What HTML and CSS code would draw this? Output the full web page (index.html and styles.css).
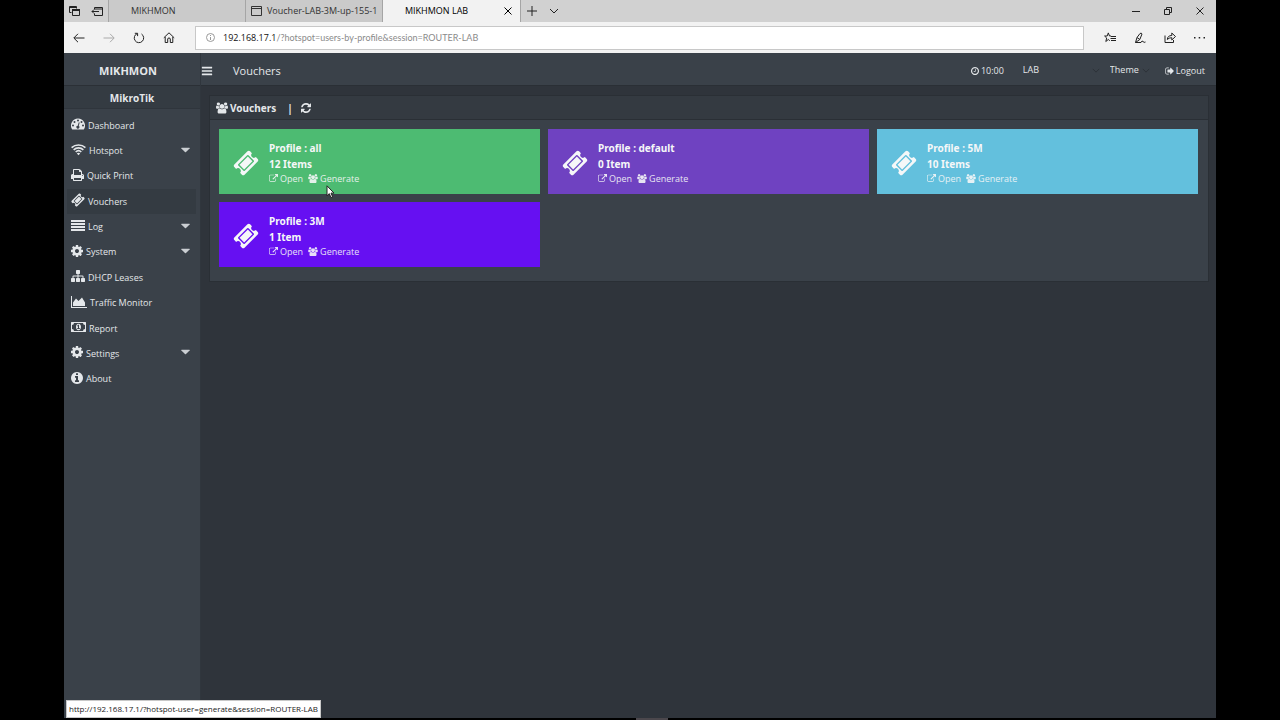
FILE: index.html
```html
<!DOCTYPE html>
<html lang="en">
<head>
<meta charset="utf-8">
<title>MIKHMON LAB</title>
<link rel="stylesheet" href="styles.css">
</head>
<body>
<svg class="sprite" aria-hidden="true">
  <symbol id="ticket" viewBox="0 0 1792 1792"><path d="M1024 452l316 316-572 572-316-316zm-211 979l618-618q19-19 19-45t-19-45l-362-362q-18-18-45-18t-45 18l-618 618q-19 19-19 45t19 45l362 362q18 18 45 18t45-18zm889-637l-907 908q-37 37-90.5 37t-90.5-37l-126-126q56-56 56-136t-56-136-136-56-136 56l-125-126q-37-37-37-90.5t37-90.5l907-906q37-37 90.5-37t90.5 37l125 125q-56 56-56 136t56 136 136 56 136-56l126 125q37 37 37 90.5t-37 90.5z"/></symbol>
  <symbol id="bars" viewBox="0 0 1792 1792"><path d="M1664 1344v128q0 26-19 45t-45 19h-1408q-26 0-45-19t-19-45v-128q0-26 19-45t45-19h1408q26 0 45 19t19 45zm0-512v128q0 26-19 45t-45 19h-1408q-26 0-45-19t-19-45v-128q0-26 19-45t45-19h1408q26 0 45 19t19 45zm0-512v128q0 26-19 45t-45 19h-1408q-26 0-45-19t-19-45v-128q0-26 19-45t45-19h1408q26 0 45 19t19 45z"/></symbol>
  <symbol id="cog" viewBox="128 0 1536 1792"><path d="M1152 896q0-106-75-181t-181-75-181 75-75 181 75 181 181 75 181-75 75-181zm512-109v222q0 12-8 23t-20 13l-185 28q-19 54-39 91 35 50 107 138 10 12 10 25t-9 23q-27 37-99 108t-94 71q-12 0-26-9l-138-108q-44 23-91 38-16 136-29 186-7 28-36 28h-222q-14 0-24.5-8.5t-11.5-21.5l-28-184q-49-16-90-37l-141 107q-10 9-25 9-14 0-25-11-126-114-165-168-7-10-7-23 0-12 8-23 15-21 51-66.5t54-70.5q-27-50-41-99l-183-27q-13-2-21-12.5t-8-23.5v-222q0-12 8-23t19-13l186-28q14-46 39-92-40-57-107-138-10-12-10-24 0-10 9-23 26-36 98.5-107.5t94.5-71.5q13 0 26 10l138 107q44-23 91-38 16-136 29-186 7-28 36-28h222q14 0 24.5 8.5t11.5 21.5l28 184q49 16 90 37l142-107q9-9 24-9 13 0 25 10 129 119 165 170 7 8 7 22 0 12-8 23-15 21-51 66.5t-54 70.5q26 50 41 98l183 28q13 2 21 12.5t8 23.5z"/></symbol>
  <symbol id="info" viewBox="128 0 1536 1792"><path d="M1152 1376v-160q0-14-9-23t-23-9h-96v-512q0-14-9-23t-23-9h-320q-14 0-23 9t-9 23v160q0 14 9 23t23 9h96v320h-96q-14 0-23 9t-9 23v160q0 14 9 23t23 9h448q14 0 23-9t9-23zm-128-896v-160q0-14-9-23t-23-9h-192q-14 0-23 9t-9 23v160q0 14 9 23t23 9h192q14 0 23-9t9-23zm640 416q0 209-103 385.5t-279.5 279.5-385.5 103-385.5-103-279.5-279.5-103-385.5 103-385.5 279.5-279.5 385.5-103 385.5 103 279.5 279.5 103 385.5z"/></symbol>
  <symbol id="open" viewBox="0 0 1792 1792"><path d="M1408 928v320q0 119-84.5 203.5t-203.5 84.5h-832q-119 0-203.5-84.5t-84.5-203.5v-832q0-119 84.5-203.5t203.5-84.5h704q14 0 23 9t9 23v64q0 14-9 23t-23 9h-704q-66 0-113 47t-47 113v832q0 66 47 113t113 47h832q66 0 113-47t47-113v-320q0-14 9-23t23-9h64q14 0 23 9t9 23zm384-864v512q0 26-19 45t-45 19-45-19l-176-176-652 652q-10 10-23 10t-23-10l-114-114q-10-10-10-23t10-23l652-652-176-176q-19-19-19-45t19-45 45-19h512q26 0 45 19t19 45z"/></symbol>
  <symbol id="refresh" viewBox="128 0 1536 1792"><path d="M1639 1056q0 5-1 7-64 268-268 434.5t-478 166.5q-146 0-282.5-55t-243.5-157l-129 129q-19 19-45 19t-45-19-19-45v-448q0-26 19-45t45-19h448q26 0 45 19t19 45-19 45l-137 137q71 66 161 102t187 36q134 0 250-65t186-179q11-17 53-117 8-23 30-23h192q13 0 22.5 9.5t9.5 22.5zm25-800v448q0 26-19 45t-45 19h-448q-26 0-45-19t-19-45 19-45l138-138q-148-137-349-137-134 0-250 65t-186 179q-11 17-53 117-8 23-30 23h-199q-13 0-22.5-9.5t-9.5-22.5v-7q65-268 270-434.5t480-166.5q146 0 284 55.5t245 156.5l130-129q19-19 45-19t45 19 19 45z"/></symbol>
  <symbol id="clock" viewBox="128 0 1536 1792"><path d="M1024 544v448q0 14-9 23t-23 9h-320q-14 0-23-9t-9-23v-64q0-14 9-23t23-9h224v-352q0-14 9-23t23-9h64q14 0 23 9t9 23zm416 352q0-148-73-273t-198-198-273-73-273 73-198 198-73 273 73 273 198 198 273 73 273-73 198-198 73-273zm224 0q0 209-103 385.5t-279.5 279.5-385.5 103-385.5-103-279.5-279.5-103-385.5 103-385.5 279.5-279.5 385.5-103 385.5 103 279.5 279.5 103 385.5z"/></symbol>
  <symbol id="sitemap" viewBox="0 0 1792 1792"><path d="M1792 1248v320q0 40-28 68t-68 28h-320q-40 0-68-28t-28-68v-320q0-40 28-68t68-28h96v-192h-512v192h96q40 0 68 28t28 68v320q0 40-28 68t-68 28h-320q-40 0-68-28t-28-68v-320q0-40 28-68t68-28h96v-192h-512v192h96q40 0 68 28t28 68v320q0 40-28 68t-68 28h-320q-40 0-68-28t-28-68v-320q0-40 28-68t68-28h96v-192q0-52 38-90t90-38h512v-192h-96q-40 0-68-28t-28-68v-320q0-40 28-68t68-28h320q40 0 68 28t28 68v320q0 40-28 68t-68 28h-96v192h512q52 0 90 38t38 90v192h96q40 0 68 28t28 68z"/></symbol>
  <symbol id="logout" viewBox="0 0 1664 1792"><path d="M704 1440q0 4 1 20t.5 26.5-3 23.5-10 19.5-20.5 6.5h-320q-119 0-203.5-84.5t-84.5-203.5v-704q0-119 84.5-203.5t203.5-84.5h320q13 0 22.5 9.5t9.5 22.5q0 4 1 20t.5 26.5-3 23.5-10 19.5-20.5 6.5h-320q-66 0-113 47t-47 113v704q0 66 47 113t113 47h312l11.5 1 11.5 3 8 5.5 7 9 2 13.5zm928-544q0 26-19 45l-544 544q-19 19-45 19t-45-19-19-45v-288h-448q-26 0-45-19t-19-45v-384q0-26 19-45t45-19h448v-288q0-26 19-45t45-19 45 19l544 544q19 19 19 45z"/></symbol>
  <symbol id="print" viewBox="64 0 1664 1792"><path d="M448 1536h896v-256h-896v256zm0-640h896v-384h-160q-40 0-68-28t-28-68v-160h-640v640zm1152 64q0-26-19-45t-45-19-45 19-19 45 19 45 45 19 45-19 19-45zm128 0v416q0 13-9.500 22.500t-22.500 9.500h-224v160q0 40-28 68t-68 28h-960q-40 0-68-28t-28-68v-160h-224q-13 0-22.500-9.500t-9.500-22.500v-416q0-79 56.500-135.500t135.500-56.500h64v-544q0-40 28-68t68-28h672q40 0 88 20t76 48l152 152q28 28 48 76t20 88v256h64q79 0 135.500 56.500t56.500 135.500z"/></symbol>
  <symbol id="users" viewBox="0 0 1920 1792"><path d="M593 896q-162 5-265 128h-134q-82 0-138-40.500t-56-118.500q0-353 124-353 6 0 43.500 21t97.500 42.500 119 21.500q67 0 133-23-5 37-5 66 0 139 81 256zm1071 637q0 120-73 189.500t-194 69.500h-874q-121 0-194-69.500t-73-189.500q0-53 3.500-103.500t14-109 26.500-108.500 43-97.500 62-81 85.500-53.500 111.500-20q10 0 43 21.500t73 48 107 48 135 21.500 135-21.500 107-48 73-48 43-21.500q61 0 111.500 20t85.500 53.500 62 81 43 97.500 26.500 108.500 14 109 3.500 103.500zm-1024-1277q0 106-75 181t-181 75-181-75-75-181 75-181 181-75 181 75 75 181zm704 384q0 159-112.500 271.500t-271.500 112.500-271.500-112.500-112.500-271.500 112.500-271.500 271.500-112.500 271.500 112.500 112.500 271.500zm576 225q0 78-56 118.500t-138 40.500h-134q-103-123-265-128 81-117 81-256 0-29-5-66 66 23 133 23 59 0 119-21.500t97.500-42.500 43.500-21q124 0 124 353zm-128-609q0 106-75 181t-181 75-181-75-75-181 75-181 181-75 181 75 75 181z"/></symbol>
  <symbol id="gauge" viewBox="0 0 28 28"><path fill-rule="evenodd" d="M14 3A14 14 0 0 0 2.200 24.500Q2.500 25 3.100 25H24.900Q25.500 25 25.800 24.500A14 14 0 0 0 14 3ZM4 15a2 2 0 1 0 0 4a2 2 0 1 0 0-4ZM7 8a2 2 0 1 0 0 4a2 2 0 1 0 0-4ZM14 5a2 2 0 1 0 0 4a2 2 0 1 0 0-4ZM21 8a2 2 0 1 0 0 4a2 2 0 1 0 0-4ZM24 15a2 2 0 1 0 0 4a2 2 0 1 0 0-4ZM15.200 11.300l-1.600 6a3 3 0 1 0 1.900.5l1.600-6q.2-1-.8-1.200t-1.100.7Z"/></symbol>
  <symbol id="wifi" viewBox="0 0 30 28"><path d="M15 24.500l-3.400-3.400a5 5 0 0 1 6.800 0Z"/><path fill="none" stroke="currentColor" stroke-width="3.200" d="M9.400 18a8.200 8.200 0 0 1 11.200 0M5.300 13.600a14.300 14.300 0 0 1 19.400 0M1.200 9.300a20.300 20.300 0 0 1 27.600 0"/></symbol>
  <symbol id="lines" viewBox="0 0 14 14"><path d="M0 1h14v2H0zM0 4h14v2H0zM0 7h14v2H0zM0 10h14v2H0z"/></symbol>
  <symbol id="chart" viewBox="0 0 32 28"><path d="M0 2h2v22h30v2H0zM4 22v-7l6-8 5 5 7-7 6 10v7z"/></symbol>
  <symbol id="money" viewBox="0 0 30 28"><path fill-rule="evenodd" d="M1 4h28q1 0 1 1v18q0 1-1 1H1q-1 0-1-1V5q0-1 1-1ZM6 6q0 4-4 4v8q4 0 4 4h18q0-4 4-4v-8q-4 0-4-4ZM15 7.500c3.300 0 5 3 5 6.500s-1.700 6.500-5 6.500-5-3-5-6.500 1.700-6.500 5-6.500ZM14.500 9.500l-2.700 2.300 1 1.200 1.200-1v4.500h-2v1.500h6v-1.500h-2v-7Z"/></symbol>
  <symbol id="caret" viewBox="0 0 10 6"><path d="M.6.500h8.800q.6.200.2.800L5.600 5.200q-.6.500-1.200 0L.4 1.300Q0 .7.600.500Z"/></symbol>
  <symbol id="chevron" viewBox="0 0 10 6"><path class="line" d="M1 1l4 4 4-4"/></symbol>
</svg>

<div class="browser">
  <header class="tabs">
    <div class="tab-tools">
      <button class="plain" aria-label="Tabs set aside"><svg width="11" height="10" viewBox="0 0 11 10"><path class="line" d="M2.500 6.500h-2v-6h7v2M.5 1.500h7"/><path class="line" d="M3.500 3.500h7v6h-7z"/><path d="M3 3h8v2H3z"/></svg></button>
      <button class="plain" aria-label="Set tabs aside"><svg width="12" height="9" viewBox="0 0 12 9"><path class="line" d="M3.500 2.500v-2h8v8h-8v-2M4 2h7M8 4.500H1M3 2.500l-2 2 2 2"/></svg></button>
    </div>
    <button class="tab">MIKHMON</button>
    <button class="tab tab-icon"><svg width="11" height="10" viewBox="0 0 11 10"><path class="line" d="M.5.500h10v9H.5zM.5 2.500h10"/></svg><span>Voucher-LAB-3M-up-155-1</span></button>
    <div class="tab active"><span>MIKHMON LAB</span><button class="plain" aria-label="Close tab"><svg width="8" height="8" viewBox="0 0 8 8"><path class="line" d="M.5.500l7 7M7.500.500l-7 7"/></svg></button></div>
    <button class="plain new" aria-label="New tab"><svg width="10" height="10" viewBox="0 0 10 10"><path class="line" d="M5 0v10M0 5h10"/></svg></button>
    <button class="plain more" aria-label="Tab previews"><svg width="10" height="6"><use href="#chevron"/></svg></button>
    <div class="window">
      <button class="plain" aria-label="Minimize"><svg width="8" height="8" viewBox="0 0 8 8"><path class="line" d="M0 4.500h8"/></svg></button>
      <button class="plain" aria-label="Restore"><svg width="8" height="8" viewBox="0 0 8 8"><path class="line" d="M.5 2.500h5v5h-5zM2.500 2V.5h5v5H6"/></svg></button>
      <button class="plain" aria-label="Close"><svg width="8" height="8" viewBox="0 0 8 8"><path class="line" d="M.5.500l7 7M7.500.500l-7 7"/></svg></button>
    </div>
  </header>

  <div class="toolbar">
    <div class="nav-tools">
      <button class="plain" aria-label="Back"><svg width="12" height="10" viewBox="0 0 12 10"><path class="line" d="M11.500 5H1M5 .8L.8 5 5 9.200"/></svg></button>
      <button class="plain dim" aria-label="Forward"><svg width="12" height="10" viewBox="0 0 12 10"><path class="line" d="M.5 5H11M7 .8L11.200 5 7 9.200"/></svg></button>
      <button class="plain" aria-label="Refresh"><svg width="12" height="12" viewBox="0 0 12 12"><path class="line" d="M4.200 1.600A4.700 4.700 0 1 0 8.500 2M1.800 1.300h2.800v2.800"/></svg></button>
      <button class="plain" aria-label="Home"><svg width="12" height="11" viewBox="0 0 12 11"><path class="line" d="M.8 5.800L6 .8l5.200 5M2.200 5v5.500h2.500V7q0-1 1.300-1t1.300 1v3.500h2.500V5"/></svg></button>
    </div>
    <div class="address">
      <svg width="9" height="9" viewBox="0 0 9 9"><circle class="line" cx="4.500" cy="4.500" r="4"/><path class="line" d="M4.500 4v3M4.500 2v1"/></svg>
      <label for="url">192.168.17.1</label><input id="url" type="text" value="/?hotspot=users-by-profile&amp;session=ROUTER-LAB">
    </div>
    <div class="page-tools">
      <button class="plain" aria-label="Favorites"><svg width="12" height="11" viewBox="0 0 12 11"><path class="line" d="M7 4H5.500L4.300.900 3.200 4H.6l2.100 2-.9 3.500 2.500-2 1.500 1.200M7 4.500h5M6.500 6.500H12M7 8.500h5"/></svg></button>
      <button class="plain" aria-label="Notes"><svg width="12" height="12" viewBox="0 0 12 12"><path class="line" d="M1.500 10.500L3 5.500l3-4q1.500-1 2 .5L5.800 7.500zM3 5.500l2.800 2M1.500 10.500H7q1-2.500 2-1t2.500.5"/></svg></button>
      <button class="plain" aria-label="Share"><svg width="12" height="11" viewBox="0 0 12 11"><path class="line" d="M1 3.500v7h8.500V8M3.300 7.500q.2-4 4.500-4V1l3.700 3.500L7.800 8V5.700q-3 0-4.500 1.800z"/></svg></button>
      <button class="plain" aria-label="More"><svg width="11" height="3" viewBox="0 0 11 3"><path d="M0 1h1.500v1.500H0zM4.700 1h1.500v1.500H4.700zM9.500 1H11v1.500H9.500z"/></svg></button>
    </div>
  </div>

  <div class="app">
    <aside class="sidebar">
      <a class="brand" href="#">MIKHMON</a>
      <div class="router">MikroTik</div>
      <nav class="menu">
        <a href="#"><svg class="i14"><use href="#gauge"/></svg>Dashboard</a>
        <a href="#"><svg class="i15"><use href="#wifi"/></svg>Hotspot<svg class="caret"><use href="#caret"/></svg></a>
        <a href="#"><svg class="i13"><use href="#print"/></svg>Quick Print</a>
        <a href="#" class="current"><svg class="i14"><use href="#ticket"/></svg>Vouchers</a>
        <a href="#"><svg class="i14"><use href="#lines"/></svg>Log<svg class="caret"><use href="#caret"/></svg></a>
        <a href="#"><svg class="i12"><use href="#cog"/></svg>System<svg class="caret"><use href="#caret"/></svg></a>
        <a href="#"><svg class="i14"><use href="#sitemap"/></svg>DHCP Leases</a>
        <a href="#"><svg class="i16"><use href="#chart"/></svg>Traffic Monitor</a>
        <a href="#"><svg class="i15"><use href="#money"/></svg>Report</a>
        <a href="#"><svg class="i12"><use href="#cog"/></svg>Settings<svg class="caret"><use href="#caret"/></svg></a>
        <a href="#"><svg class="i12"><use href="#info"/></svg>About</a>
      </nav>
    </aside>

    <div class="content">
      <header class="topnav">
        <button class="plain" aria-label="Toggle menu"><svg width="12" height="12"><use href="#bars"/></svg></button>
        <span class="title">Vouchers</span>
        <span class="clock"><svg width="8" height="10"><use href="#clock"/></svg>10:00</span>
        <span class="pick session"><select aria-label="Session"><option>LAB</option></select><svg><use href="#chevron"/></svg></span>
        <span class="pick theme"><select aria-label="Theme"><option>Theme</option></select><svg><use href="#chevron"/></svg></span>
        <a class="logout" href="#"><svg width="9" height="10"><use href="#logout"/></svg>Logout</a>
      </header>

      <main>
        <section class="panel">
          <h1><svg width="12" height="12"><use href="#users"/></svg>Vouchers <span class="bar">|</span><button class="plain" aria-label="Reload"><svg width="10" height="12"><use href="#refresh"/></svg></button></h1>
          <div class="cards">
            <article class="card green"><svg class="big"><use href="#ticket"/></svg><div><h2>Profile : all</h2><h2>12 Items</h2><p><a href="#"><svg class="i9"><use href="#open"/></svg>Open</a><a href="#"><svg class="i10"><use href="#users"/></svg>Generate</a></p></div></article>
            <article class="card purple"><svg class="big"><use href="#ticket"/></svg><div><h2>Profile : default</h2><h2>0 Item</h2><p><a href="#"><svg class="i9"><use href="#open"/></svg>Open</a><a href="#"><svg class="i10"><use href="#users"/></svg>Generate</a></p></div></article>
            <article class="card cyan"><svg class="big"><use href="#ticket"/></svg><div><h2>Profile : 5M</h2><h2>10 Items</h2><p><a href="#"><svg class="i9"><use href="#open"/></svg>Open</a><a href="#"><svg class="i10"><use href="#users"/></svg>Generate</a></p></div></article>
            <article class="card indigo"><svg class="big"><use href="#ticket"/></svg><div><h2>Profile : 3M</h2><h2>1 Item</h2><p><a href="#"><svg class="i9"><use href="#open"/></svg>Open</a><a href="#"><svg class="i10"><use href="#users"/></svg>Generate</a></p></div></article>
          </div>
        </section>
      </main>
    </div>
  </div>
  <div class="status">http://192.168.17.1/?hotspot-user=generate&amp;session=ROUTER-LAB</div>
  <svg class="pointer" width="9" height="14" viewBox="0 0 9 14"><path d="M1 .8v10l2.300-2.200 1.600 4 1.700-.8-1.600-3.700h3z"/></svg>
</div>
<div class="home-bar"></div>
</body>
</html>
```
FILE: styles.css
```css
* { box-sizing: border-box; }
body {
  margin: 0;
  min-height: 100vh;
  display: flex;
  flex-direction: column;
  background: #000;
  color: #e4e7ea;
  font: 9px/16px "Open Sans", "Noto Sans", sans-serif;
}
svg { display: block; flex: none; fill: currentColor; }
.sprite { position: absolute; width: 0; height: 0; }
.line { fill: none; stroke: currentColor; stroke-width: 1; }
a { color: inherit; text-decoration: none; }
.plain { border: 0; padding: 0; background: none; color: inherit; font: inherit; }
.browser {
  position: relative;
  flex: 1;
  display: flex;
  flex-direction: column;
  margin: 0 5%;
}
.home-bar { width: 32px; height: 2px; margin-left: calc(50% - 4px); background: #4b474c; }

/* browser chrome */
.tabs {
  display: flex;
  height: 22px;
  background: #d1d1d1;
  color: #222;
}
.tab-tools { display: flex; align-items: center; width: 44px; padding-left: 5px; gap: 11px; }
.tab {
  display: flex;
  align-items: center;
  width: 137px;
  padding: 0 0 0 22px;
  border: 0;
  border-left: 1px solid #a5a5a5;
  background: #cacaca;
  color: #333;
  font: inherit;
  white-space: nowrap;
}
.tab-icon { gap: 5px; padding-left: 5px; }
.tab.active {
  justify-content: space-between;
  width: 139px;
  padding-right: 8px;
  border-right: 1px solid #a5a5a5;
  background: #f2f2f2;
  color: #000;
}
.new { margin-left: 6px; }
.more { margin-left: 12px; }
.window { display: flex; align-items: center; gap: 24px; margin-left: auto; padding-right: 12px; }
.toolbar {
  display: flex;
  align-items: center;
  height: 31px;
  background: #f2f2f2;
  color: #222;
}
.nav-tools { display: flex; align-items: center; gap: 18px; width: 131px; padding-left: 9px; }
.dim { color: #aaa; }
.address {
  flex: 1;
  display: flex;
  align-items: center;
  height: 24px;
  padding-left: 10px;
  border: 1px solid #c8c8c8;
  background: #fff;
  color: #111;
}
.address svg { margin-right: 8px; color: #999; }
.address input {
  flex: 1;
  min-width: 0;
  padding: 0;
  border: 0;
  outline: 0;
  background: none;
  color: #8a8a8a;
  font: 9px/16px Lato, "Open Sans", sans-serif;
}
.page-tools { display: flex; align-items: center; gap: 18px; width: 132px; padding-left: 20px; }

/* app frame */
.app { flex: 1; display: flex; background: #2f343b; }
.sidebar { width: 137px; background: #3a4149; border-right: 1px solid #30363d; }
.brand, .router { display: block; text-align: center; font-weight: bold; }
.brand { height: 32px; padding-right: 8px; font-size: 11px; line-height: 36px; }
.router {
  height: 24px;
  border-top: 1px solid #2b3036;
  border-bottom: 1px solid #2f353c;
  background: #343b42;
  font-size: 10px;
  line-height: 24px;
}
.menu { display: grid; grid-auto-rows: 1fr; min-height: 279px; margin: 4px 4px 0 3px; }
.menu a { display: flex; align-items: center; gap: 3px; padding: 0 6px 0 4px; }
.menu a svg { height: 14px; margin-bottom: 3px; }
.menu .current { background: #343b42; }
.menu a .caret { width: 9px; height: 6px; margin-left: auto; opacity: .85; }
.i9 { width: 9px; height: 9px; }
.i10 { width: 10px; height: 9px; }
.i12 { width: 12px; }
.i13 { width: 13px; }
.i14 { width: 14px; }
.i15 { width: 15px; }
.i16 { width: 16px; }

.content { flex: 1; min-width: 0; }
.topnav {
  display: flex;
  align-items: center;
  height: 33px;
  padding: 3px 11px 0 0;
  border-bottom: 1px solid #2a2f35;
  background: #3a4149;
}
.title { margin: 0 auto 0 20px; font-size: 11px; }
.clock, .logout { display: flex; align-items: center; gap: 2px; }
.pick { position: relative; margin-bottom: 2px; }
.pick select {
  width: 100%;
  padding: 0;
  border: 0;
  appearance: none;
  background: none;
  color: inherit;
  font: inherit;
}
.pick svg { position: absolute; right: 0; top: 6px; width: 8px; height: 5px; color: #2a2f35; pointer-events: none; }
.session { width: 77px; margin-left: 19px; }
.theme { width: 40px; margin: 0 15px 2px 10px; }

main { padding: 9px 7px 9px 8px; }
.panel { border: 1px solid #2a2f35; background: #3a4149; }
.panel h1 {
  display: flex;
  align-items: center;
  height: 24px;
  margin: 0;
  padding-left: 6px;
  border-bottom: 1px solid #2a2f35;
  background: #343a41;
  font-family: "Noto Sans", sans-serif;
  font-size: 10px;
  line-height: 24px;
}
.panel h1 > svg { margin-right: 2px; }
.bar { margin: 0 8px 0 11px; }
.cards {
  display: grid;
  grid-template-columns: repeat(3, 1fr);
  gap: 8px;
  padding: 9px 10px 14px 9px;
}
.card { display: flex; align-items: center; height: 65px; padding: 2px 14px 0; color: #f5f7f8; }
.card .big { width: 26px; height: 26px; margin-right: 10px; }
.card h2 { margin: 0; font-family: "Noto Sans", sans-serif; font-size: 10px; line-height: 16px; }
.card p { display: flex; gap: 5px; margin: 0; line-height: 14px; opacity: .9; }
.card p a { display: flex; align-items: center; gap: 2px; }
.green { background: #4dbb72; }
.purple { background: #6f42c1; }
.cyan { background: #63c0dd; }
.indigo { background: #6610f2; }

.status {
  position: absolute;
  left: 2px;
  bottom: 0;
  padding: 0 2px;
  border: 1px solid #c8c8c8;
  background: #fff;
  color: #222;
  font-size: 8px;
}
.pointer { position: absolute; left: 262px; top: 185px; fill: #fff; stroke: #222; stroke-width: 1; }
```
